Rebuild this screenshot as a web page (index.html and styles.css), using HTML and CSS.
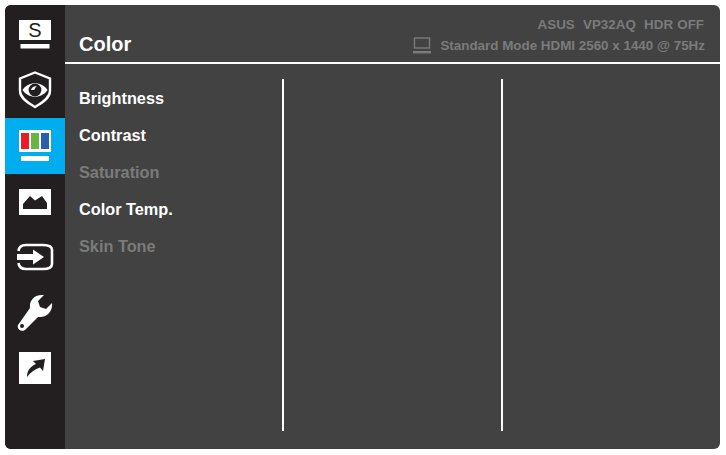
FILE: index.html
```html
<!DOCTYPE html>
<html lang="en">
<head>
  <meta charset="UTF-8">
  <title>Color</title>
  <link rel="stylesheet" href="styles.css">
</head>
<body>

<div class="osd">
  <div class="sidebar">
    <div class="side-item">
      <svg width="36" height="30" viewBox="0 0 36 30">
        <rect x="2" y="0" width="32" height="20" fill="#fff"/>
        <rect x="3.5" y="24" width="29" height="4.5" fill="#fff"/>
        <text x="18" y="16.5" class="s-letter">S</text>
      </svg>
    </div>
    <div class="side-item">
      <svg width="36" height="38" viewBox="0 0 36 38">
        <path d="M18 1.5 L33 7.5 V20 C33 27 25 32 18 36 C11 32 3 27 3 20 V7.5 Z" fill="none" stroke="#fff" stroke-width="2.4"/>
        <path d="M5.5 19 C11 10 25 10 30.5 19 C25 28 11 28 5.5 19 Z" fill="#fff"/>
        <circle cx="18" cy="19" r="6.4" fill="#231f20"/>
        <path d="M14 19 C14.5 16 17 14.8 20 15.2 C18.5 16 17.5 17.5 17.5 19 H14 Z" fill="#fff"/>
      </svg>
    </div>
    <div class="side-item active">
      <svg width="36" height="32" viewBox="0 0 36 32">
        <rect x="2" y="0" width="32" height="22" fill="#fff"/>
        <rect x="4" y="3" width="8" height="16" fill="#ed1c24"/>
        <rect x="14" y="3" width="8" height="16" fill="#6ab344"/>
        <rect x="24" y="3" width="8" height="16" fill="#2b5ea8"/>
        <rect x="4" y="26" width="28" height="5" fill="#fff"/>
      </svg>
    </div>
    <div class="side-item">
      <svg width="32" height="26" viewBox="0 0 32 26">
        <rect width="32" height="26" fill="#fff"/>
        <path d="M4 20 V15 L11 7 L16 11.5 L23 7 L28 14 V20 Z" fill="#231f20"/>
      </svg>
    </div>
    <div class="side-item">
      <svg width="38" height="28" viewBox="0 0 38 28">
        <path d="M2.5 8 C3 3 6 2 10 2 H27 C32 2 36 3 36 7 V21 C36 25 32 26 27 26 H10 C6 26 3 25 2.5 20" fill="none" stroke="#fff" stroke-width="2.6"/>
        <path d="M1 11 H17 V6.5 L28 14 L17 21.5 V17 H1 Z" fill="#fff"/>
      </svg>
    </div>
    <div class="side-item">
      <svg width="38" height="38" viewBox="0 0 38 38">
        <path d="M14 14 C13 6 19 0 28 1 L22 7 L24 13 L30 15 L36 9 C37 17 31 24 22 23 L9 36 C5 38.5 0.5 35 2 31 Z" fill="#fff"/>
        <circle cx="6" cy="32" r="2" fill="#231f20"/>
      </svg>
    </div>
    <div class="side-item">
      <svg width="32" height="32" viewBox="0 0 32 32">
        <rect width="32" height="32" fill="#fff"/>
        <path d="M8 25 C8 18 12 14 17 12 L14 9 L26 7 L24 19 L21 15.5 C16 17 12 20 8 25 Z" fill="#231f20"/>
      </svg>
    </div>
  </div>

  <div class="main">
    <div class="header">
      <h1 class="title">Color</h1>
      <div class="info">
        <div class="info-top">ASUS&nbsp; VP32AQ&nbsp; HDR OFF</div>
        <div class="info-bottom">
          <svg width="18" height="17" viewBox="0 0 18 17">
            <rect x="1.5" y="1" width="15" height="10" fill="none" stroke="#7b7b7b" stroke-width="1.4"/>
            <rect x="0" y="14" width="18" height="2.4" fill="#7b7b7b"/>
          </svg>
          <span>Standard Mode HDMI 2560 x 1440 @ 75Hz</span>
        </div>
      </div>
    </div>

    <div class="columns">
      <ul class="menu">
        <li>Brightness</li>
        <li>Contrast</li>
        <li class="off">Saturation</li>
        <li>Color Temp.</li>
        <li class="off">Skin Tone</li>
      </ul>
      <div class="column"></div>
      <div class="column"></div>
    </div>
  </div>
</div>

</body>
</html>
```

FILE: styles.css
```css
* {
  box-sizing: border-box;
}
body {
  margin: 0;
  padding: 5px 6px 6px 5px;
  background: #fff;
  font-family: "Liberation Sans", Arial, sans-serif;
}
.osd {
  display: flex;
  height: 444px;
  border-radius: 6px;
  overflow: hidden;
  background: #424242;
}
.sidebar {
  width: 60px;
  padding-top: 2px;
  background: #231f20;
}
.side-item {
  display: flex;
  align-items: center;
  justify-content: center;
  height: 55.6px;
}
.side-item.active {
  background: #00aeef;
}
.s-letter {
  font-size: 20px;
  fill: #231f20;
  text-anchor: middle;
}
.main {
  flex: 1;
}
.header {
  display: flex;
  justify-content: space-between;
  height: 59px;
  padding: 12px 15px 0 14px;
  border-bottom: 2px solid #fff;
}
.title {
  margin: 15px 0 0;
  font-size: 20px;
  line-height: 24px;
  font-weight: 700;
  color: #fff;
}
.info {
  color: #7b7b7b;
  font-size: 13.4px;
  font-weight: 700;
  text-align: right;
}
.info-top {
  margin-right: 1px;
  line-height: 16px;
  word-spacing: 0.4px;
}
.info-bottom {
  display: flex;
  align-items: center;
  gap: 9px;
  margin-top: 4px;
  line-height: 17px;
}
.columns {
  display: grid;
  grid-template-columns: 219px 219px 1fr;
  height: 352px;
  margin-top: 15px;
}
.menu {
  margin: 0;
  padding: 1px 0 0 14px;
  list-style: none;
  border-right: 2px solid #fff;
}
.menu li {
  height: 37px;
  font-size: 16.3px;
  line-height: 37px;
  font-weight: 700;
  color: #fff;
}
.menu li.off {
  color: #7b7b7b;
}
.column:first-of-type {
  border-right: 2px solid #fff;
}
```
